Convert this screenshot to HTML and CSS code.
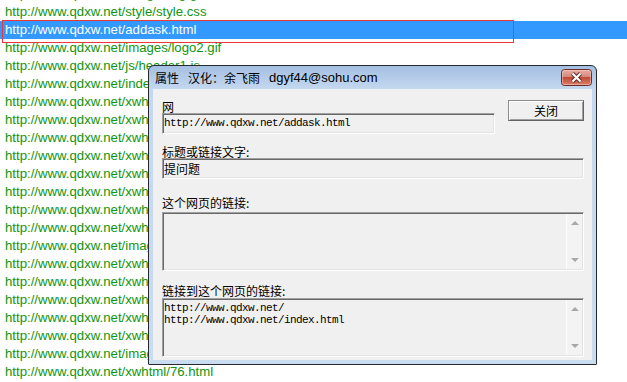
FILE: index.html
```html
<!DOCTYPE html>
<html>
<head>
<meta charset="utf-8">
<title>属性</title>
<link rel="stylesheet" href="styles.css">
</head>
<body>

<div class="list">
	<div class="row first">http://www.qdxw.net/images/bg.gif</div>
	<div class="row">http://www.qdxw.net/style/style.css</div>
	<div class="row sel">http://www.qdxw.net/addask.html<span class="mark"></span></div>
	<div class="row">http://www.qdxw.net/images/logo2.gif</div>
	<div class="row">http://www.qdxw.net/js/header1.js</div>
	<div class="row">http://www.qdxw.net/index.html</div>
	<div class="row">http://www.qdxw.net/xwhtml/61.html</div>
	<div class="row">http://www.qdxw.net/xwhtml/62.html</div>
	<div class="row">http://www.qdxw.net/xwhtml/63.html</div>
	<div class="row">http://www.qdxw.net/xwhtml/64.html</div>
	<div class="row">http://www.qdxw.net/xwhtml/65.html</div>
	<div class="row">http://www.qdxw.net/xwhtml/66.html</div>
	<div class="row">http://www.qdxw.net/xwhtml/67.html</div>
	<div class="row">http://www.qdxw.net/xwhtml/68.html</div>
	<div class="row">http://www.qdxw.net/images/pic1.jpg</div>
	<div class="row">http://www.qdxw.net/xwhtml/69.html</div>
	<div class="row">http://www.qdxw.net/xwhtml/70.html</div>
	<div class="row">http://www.qdxw.net/xwhtml/71.html</div>
	<div class="row">http://www.qdxw.net/xwhtml/72.html</div>
	<div class="row">http://www.qdxw.net/xwhtml/73.html</div>
	<div class="row">http://www.qdxw.net/images/pic2.jpg</div>
	<div class="row">http://www.qdxw.net/xwhtml/76.html</div>
</div>

<!-- properties window -->
<div class="dlg">
	<div class="cap">
		<span class="cap-cn gap">属性</span>
		<span class="cap-cn gap">汉化：余飞雨</span>
		<span>dgyf44@sohu.com</span>
		<span class="close">
			<svg width="31" height="17" viewBox="0 0 31 17">
				<defs>
					<linearGradient id="cg" x1="0" y1="0" x2="0" y2="1">
						<stop offset="0" stop-color="#eab1a6"/>
						<stop offset="0.45" stop-color="#d6897a"/>
						<stop offset="0.5" stop-color="#c24a36"/>
						<stop offset="1" stop-color="#d9826b"/>
					</linearGradient>
				</defs>
				<rect x="0.5" y="0.5" width="30" height="16" rx="3" fill="url(#cg)" stroke="#6e2b25"/>
				<rect x="1.5" y="1.5" width="28" height="14" rx="2" fill="none" stroke="#f6d0c6" stroke-opacity="0.55"/>
				<path d="M11.5 4.5 L19.5 12.5 M19.5 4.5 L11.5 12.5" stroke="#5a2a25" stroke-width="4.2"/>
				<path d="M11.5 4.5 L19.5 12.5 M19.5 4.5 L11.5 12.5" stroke="#ffffff" stroke-width="2.2"/>
			</svg>
		</span>
	</div>
	<div class="client">
		<div class="top">
			<div class="top-left">
				<div class="lbl">网</div>
				<div class="field mono">http://www.qdxw.net/addask.html</div>
			</div>
			<div class="btn">关闭</div>
		</div>

		<div class="lbl l2">标题或链接文字:</div>
		<div class="field">提问题</div>

		<div class="lbl l3">这个网页的链接:</div>
		<div class="memo">
			<div class="memo-text mono"></div>
			<div class="vscroll"><i class="up"></i><i class="down"></i></div>
		</div>

		<div class="lbl l4">链接到这个网页的链接:</div>
		<div class="memo m2">
			<div class="memo-text mono">http://www.qdxw.net/
http://www.qdxw.net/index.html</div>
			<div class="vscroll"><i class="up"></i><i class="down"></i></div>
		</div>
	</div>
</div>

</body>
</html>
```

FILE: styles.css
```css
body {
	margin: 0;
	background: #fff;
	font-family: "Liberation Sans", "Noto Sans CJK SC", sans-serif;
	overflow: hidden;
}

/* link list behind the window */
.list {
	margin-top: -15px;
}

.row {
	height: 18px;
	line-height: 18px;
	padding-left: 5px;
	font-size: 13.2px;
	color: #109410;
	white-space: nowrap;
}

.row.sel {
	position: relative;
	background: #3399ff;
	color: #fff;
}

.mark {
	position: absolute;
	left: 2px;
	top: -1px;
	width: 512px;
	height: 23px;
	box-sizing: border-box;
	border: 1px solid #e8383c;
}

/* window */
.dlg {
	position: absolute;
	left: 148px;
	top: 65px;
	width: 439px;
	height: 294px;
	padding: 0 4px 4px;
	border: 1px solid #262a30;
	border-radius: 6px 6px 1px 1px;
	background: linear-gradient(#a4bfe2, #c4d8ef 23px, #cadcf0);
}

.cap {
	display: flex;
	align-items: center;
	height: 23px;
	padding-left: 2px;
	font-size: 13px;
	color: #000;
	white-space: nowrap;
}

.cap-cn {
	font-size: 12px;
}

.gap {
	margin-right: 9px;
}

.close {
	display: flex;
	margin-left: auto;
}

.client {
	height: 271px;
	box-sizing: border-box;
	padding: 11px 8px 0 9px;
	background: #f0f0f0;
	font-family: "Noto Sans CJK SC", sans-serif;
	font-size: 12px;
	color: #000;
}

.top {
	display: flex;
	justify-content: space-between;
	align-items: flex-start;
}

.top-left {
	width: 333px;
}

.lbl {
	height: 13px;
	line-height: 13px;
	white-space: nowrap;
}

.l2 { margin-top: 11px; }
.l3 { margin-top: 17px; }
.l4 { margin-top: 13px; }

.field {
	height: 21px;
	box-sizing: border-box;
	padding-left: 1px;
	line-height: 19px;
	white-space: nowrap;
	overflow: hidden;
	border: 1px solid;
	border-color: #a0a0a0 #fff #fff #a0a0a0;
	box-shadow: inset 1px 1px #696969, inset -1px -1px #e3e3e3;
}

.mono {
	font-family: "Liberation Mono", monospace;
	font-size: 11px;
	letter-spacing: -0.6px;
}

.btn {
	width: 76px;
	height: 21px;
	box-sizing: border-box;
	border: 1px solid;
	border-color: #8c8c8c #646464 #646464 #8c8c8c;
	box-shadow: inset 1px 1px #fff, inset -1px -1px #a0a0a0;
	background: #f0f0f0;
	text-align: center;
	line-height: 19px;
}

.memo {
	display: flex;
	height: 59px;
	margin-top: 3px;
	box-sizing: border-box;
	border: 1px solid;
	border-color: #a0a0a0 #fff #fff #a0a0a0;
	box-shadow: inset 1px 1px #696969, inset -1px -1px #e3e3e3;
}

.m2 {
	margin-top: 1px;
}

.memo-text {
	flex: 1;
	padding: 3px 0 0 1px;
	line-height: 12px;
	white-space: pre;
}

.vscroll {
	width: 16px;
	margin: 1px 1px 1px 0;
	box-sizing: border-box;
	padding: 7px 0;
	display: flex;
	flex-direction: column;
	justify-content: space-between;
	align-items: center;
	background: #f3f3f3;
	border-left: 1px solid #fdfdfd;
}

.up, .down {
	width: 0;
	height: 0;
	border-left: 4px solid transparent;
	border-right: 4px solid transparent;
}

.up { border-bottom: 4px solid #a8a8a8; }
.down { border-top: 4px solid #a8a8a8; }
```
